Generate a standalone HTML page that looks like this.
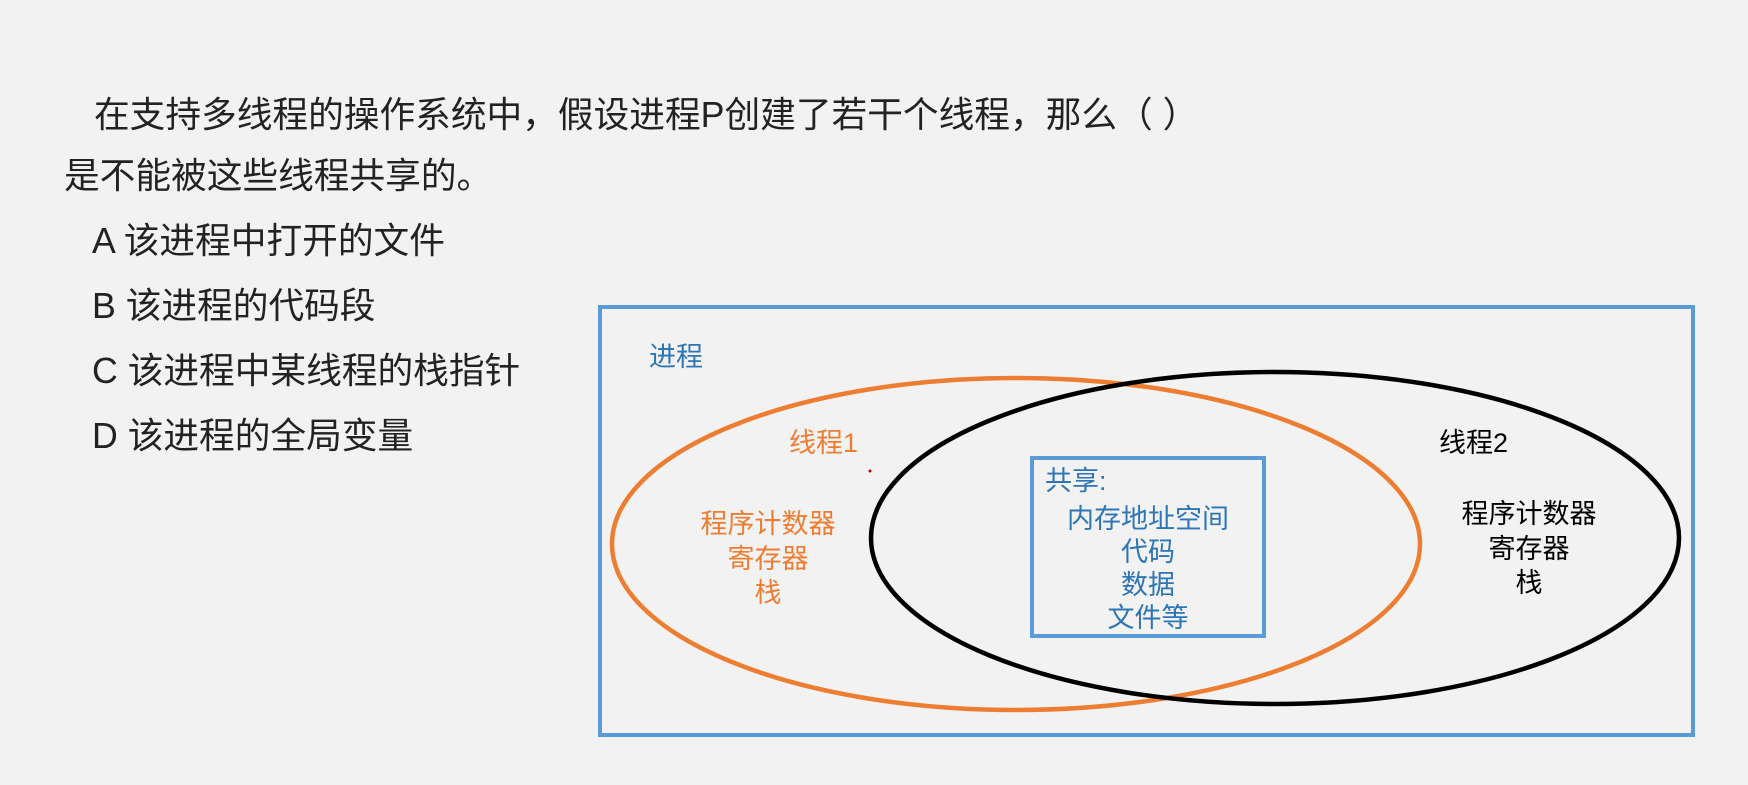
<!DOCTYPE html>
<html><head><meta charset="utf-8"><style>
html,body{margin:0;padding:0;}
body{width:1748px;height:785px;background:#f2f2f2;position:relative;overflow:hidden;font-family:"Liberation Sans","Noto Sans CJK SC",sans-serif;}
.t{position:absolute;white-space:nowrap;line-height:1;}
.q{font-size:35.7px;color:#222;}
.d{font-size:27px;}
.c{text-align:center;transform:translateX(-50%);}
</style></head><body>
<div class="t q" style="left:94px;top:98px;">在支持多线程的操作系统中，假设进程P创建了若干个线程，那么（ ）</div>
<div class="t q" style="left:64px;top:159px;">是不能被这些线程共享的。</div>
<div class="t q" style="left:92px;top:224px;">A 该进程中打开的文件</div>
<div class="t q" style="left:92px;top:289px;">B 该进程的代码段</div>
<div class="t q" style="left:92px;top:354px;">C 该进程中某线程的栈指针</div>
<div class="t q" style="left:92px;top:419px;">D 该进程的全局变量</div>
<svg width="1748" height="785" style="position:absolute;left:0;top:0">
<rect x="600" y="307" width="1093" height="428" fill="none" stroke="#5b9bd5" stroke-width="4"/>
<ellipse cx="1016" cy="544" rx="404" ry="166" fill="none" stroke="#ed7d31" stroke-width="4.5"/>
<ellipse cx="1275" cy="538" rx="404" ry="166" fill="none" stroke="#000" stroke-width="4.5"/>
<rect x="1032" y="458" width="232" height="178" fill="none" stroke="#5b9bd5" stroke-width="4"/>
<circle cx="870" cy="471" r="1.5" fill="#c00"/>
</svg>
<div class="t d" style="left:649px;top:344px;color:#2e75b6;">进程</div>
<div class="t d" style="left:789px;top:430px;color:#ed7d31;">线程1</div>
<div class="t d c" style="left:768px;top:507px;color:#ed7d31;line-height:34.5px;">程序计数器<br>寄存器<br>栈</div>
<div class="t d" style="left:1439px;top:430px;color:#000;">线程2</div>
<div class="t d c" style="left:1529px;top:497px;color:#000;line-height:34.5px;">程序计数器<br>寄存器<br>栈</div>
<div class="t d" style="left:1045px;top:468px;color:#2e75b6;">共享:</div>
<div class="t d c" style="left:1148px;top:503px;color:#2e75b6;line-height:33px;">内存地址空间<br>代码<br>数据<br>文件等</div>
</body></html>
